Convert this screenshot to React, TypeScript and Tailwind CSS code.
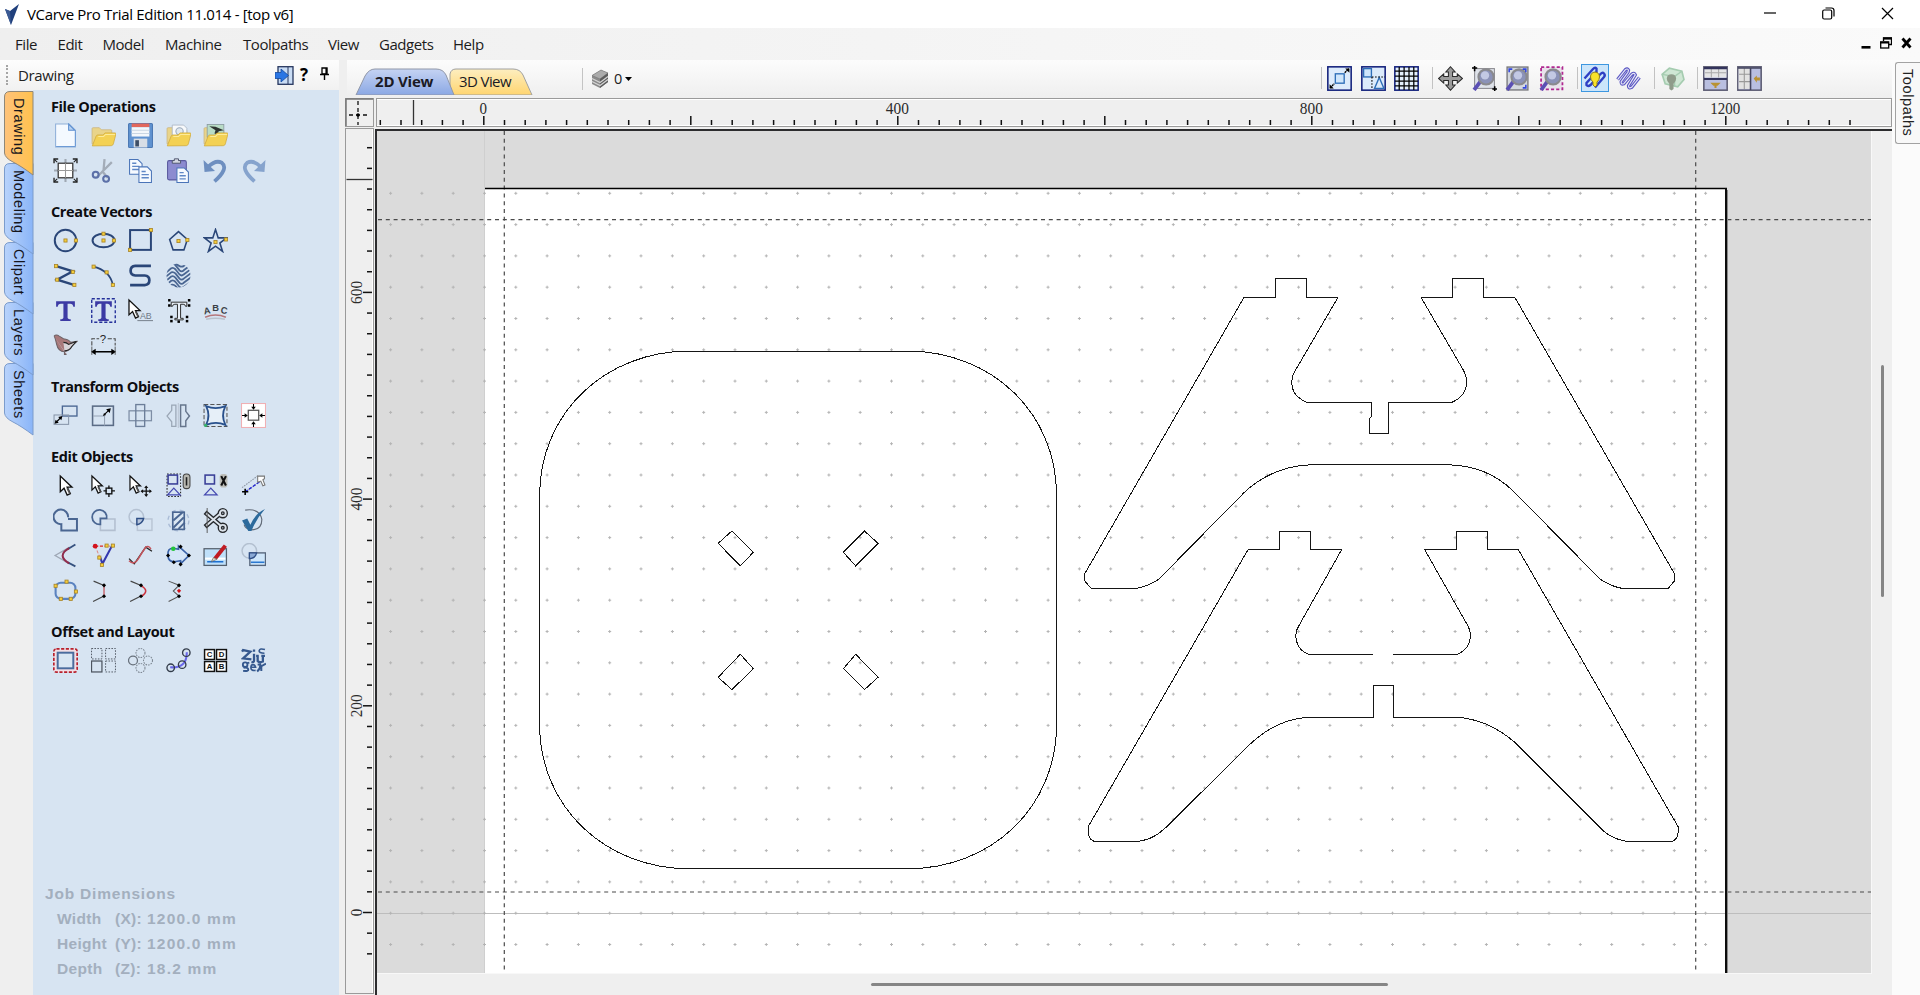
import React from "react";

type Kids = { children?: React.ReactNode };

const NAVY = "#2a4678";
const SLATE = "#4a6692";

const Icon = ({ children }: Kids) => (
  <svg width="25" height="25" viewBox="0 0 24 24" fill="none" strokeLinecap="butt">
    {children}
  </svg>
);

const Node = ({ x, y, c = "#f6cf3a" }: { x: number; y: number; c?: string }) => (
  <rect x={x - 1.5} y={y - 1.5} width="3" height="3" fill={c} stroke="#a8842a" strokeWidth="0.8" />
);

const Dot = ({ x, y, c = "#000" }: { x: number; y: number; c?: string }) => (
  <path d={`M${x - 2} ${y}l2 -2l2 2l-2 2z`} fill={c} />
);

const Cursor = ({ x = 0, y = 0, s = 1 }: { x?: number; y?: number; s?: number }) => (
  <g transform={`translate(${x} ${y}) scale(${s})`}>
    <path d="M1 1v15l3.6-3.4l3 6.6l3-1.4l-3-6.2h4.6z" fill="#fff" stroke="#111" strokeWidth="1.3" />
    <path d="M7.6 12.5l2.6 5.4" stroke="#555" strokeWidth="1.6" />
  </g>
);

const Folder = ({ children }: Kids) => (
  <Icon>
    <path d="M1 20V5.5q0-1 1-1h6l2 2h9q1 0 1 1V20z" fill="#e9d48a" stroke="#c9b27a" strokeWidth="0.7" />
    {children}
    <path d="M1.2 22L5 12.5q.5-1 1.5-1h5l2-2H23q1.3 0 .9 1.2L21.5 20q-.4 1.6-2 1.8z" fill="#f3d154" stroke="#cfa83a" strokeWidth="0.7" />
    <path d="M7 13h5l2-2h9" stroke="#fdeb9a" />
  </Icon>
);

const fileIcons = [
  <Icon>
    <path d="M2.500 1h13l6 6v16h-19z" fill="#f4f9ff" stroke="#8fafd8" />
    <path d="M15 1v6h6z" fill="#b7d2f2" stroke="#5d8fd0" />
    <path d="M3 22.500h18.500M21.500 8v14" stroke="#6c9ad6" />
  </Icon>,
  <Folder />,
  <Icon>
    <rect x="0.500" y="0.500" width="23" height="23" rx="1" fill="#5f92d0" stroke="#4c79b4" />
    <rect x="3.500" y="0.500" width="17" height="3.500" fill="#e2675c" />
    <rect x="3.500" y="4" width="17" height="9" fill="#f3f7fb" />
    <path d="M3.500 7h17M3.500 10h17" stroke="#c9d6e4" />
    <rect x="5.500" y="15" width="13" height="8.500" fill="#d8dee6" />
    <rect x="7" y="16.500" width="3.500" height="6" fill="#3d4e66" />
  </Icon>,
  <Folder>
    <path d="M6 2h11l3 3v8H6z" fill="#f7f9fb" stroke="#a9b6c4" strokeWidth="0.8" />
    <circle cx="13" cy="8" r="3.500" stroke="#9aa9bb" fill="#dfe7ee" />
  </Folder>,
  <Folder>
    <rect x="4" y="1.500" width="16" height="12" fill="#b9dcc6" stroke="#8a9aa0" strokeWidth="0.8" />
    <path d="M6 3l6 .5l8 3.500l-5 1l-1 3l-3-1l1-3z" fill="#2f3432" />
  </Folder>,
];

const editIcons = [
  <Icon>
    <path d="M12 1v22M1 12h22" stroke="#9fa8b3" strokeWidth="2" />
    <rect x="5" y="5" width="14" height="14" fill="#fff" stroke="#333" strokeWidth="1.200" />
    <path d="M12 5v14M5 12h14" stroke="#9a9a9a" />
    <path d="M1 5V1h4M19 1h4v4M23 19v4h-4M5 23H1v-4" stroke="#222" strokeWidth="1.300" />
    <path d="M1 1l3 3M23 1l-3 3M23 23l-3-3M1 23l3-3" stroke="#222" />
  </Icon>,
  <Icon>
    <path d="M13 1l-1 11l-6 6M20 4l-9 9l5 6" stroke="#a3acb8" strokeWidth="2.200" />
    <circle cx="4.500" cy="16" r="2.800" stroke="#5c70a8" strokeWidth="2" />
    <circle cx="14.500" cy="20" r="2.800" stroke="#5c70a8" strokeWidth="2" />
  </Icon>,
  <Icon>
    <path d="M1.500 1.500h8l4 4v10h-12z" fill="#f6faff" stroke="#4a74b8" />
    <path d="M4 5h4M4 8h7M4 11h7" stroke="#5f87c6" strokeWidth="1.300" />
    <path d="M10.500 8.500h8l4 4v11h-12z" fill="#f6faff" stroke="#4a74b8" />
    <path d="M13 13h4M13 16h7M13 19h7" stroke="#5f87c6" strokeWidth="1.300" />
  </Icon>,
  <Icon>
    <rect x="1.500" y="2.500" width="18" height="18.500" rx="1.500" fill="#8c8bd0" stroke="#5a5a9e" />
    <path d="M6 5V2.500h2V.8h4v1.700h2V5z" fill="#d5d9e4" stroke="#4a5068" strokeWidth="0.900" />
    <path d="M10.500 9.500h7l4 4v10h-11z" fill="#f6faff" stroke="#4a74b8" />
    <path d="M13 14h4M13 17h6M13 20h6" stroke="#5f87c6" strokeWidth="1.300" />
  </Icon>,
  <Icon>
    <path d="M5 8.500Q12 1.500 18 4.500Q25 10 11 22.500" stroke="#6e8fc0" strokeWidth="3.600" />
    <path d="M.5 2l1 11.500l10-1z" fill="#6e8fc0" />
  </Icon>,
  <Icon>
    <path d="M19 8.500Q12 1.500 6 4.500Q-1 10 13 22.500" stroke="#86a3cd" strokeWidth="3.600" />
    <path d="M23.500 2l-1 11.500l-10-1z" fill="#86a3cd" />
  </Icon>,
];

const vectorRow1 = [
  <Icon>
    <circle cx="12" cy="12" r="10.300" stroke={NAVY} strokeWidth="1.900" />
    <Node x={12} y={12} />
    <Node x={22} y={12} />
  </Icon>,
  <Icon>
    <ellipse cx="12" cy="12" rx="10.500" ry="6.500" stroke={NAVY} strokeWidth="1.900" />
    <Node x={12} y={12} />
    <Node x={12} y={5.500} />
    <Node x={22} y={12} />
  </Icon>,
  <Icon>
    <rect x="2" y="2" width="20" height="19" stroke={NAVY} strokeWidth="1.900" />
    <Node x={22} y={2} />
    <Node x={2} y={21} />
  </Icon>,
  <Icon>
    <path d="M12 3.500l8.500 7.500l-3.300 10h-10.400l-3.300-10z" stroke={NAVY} strokeWidth="1.500" />
    <Node x={12} y={12.500} />
    <Node x={20.500} y={11.500} />
  </Icon>,
  <Icon>
    <path d="M12 1.500l2.600 8h8l-6.400 5l2.600 8l-6.800-5l-6.800 5l2.600-8l-6.400-5h8z" stroke={NAVY} strokeWidth="1.500" />
    <Node x={12} y={13.500} />
    <Node x={22} y={11} />
  </Icon>,
];

const vectorRow2 = [
  <Icon>
    <path d="M3 3l16 5L4 16l16 5" stroke={NAVY} strokeWidth="2.300" />
    <Node x={3} y={3} />
    <Node x={19} y={8.500} />
    <Node x={4} y={16} />
    <Node x={20.500} y={21} />
  </Icon>,
  <Icon>
    <path d="M2 3.500Q18 7 21 21" stroke={NAVY} strokeWidth="1.600" />
    <Node x={2.500} y={3.500} />
    <Node x={15} y={9} />
    <Node x={21} y={21} />
  </Icon>,
  <Icon>
    <path d="M22 2.800H7q-4.500.4-4.500 4.600T7 12h9q4.500.3 4.500 4.600T16 21.200H2" stroke={NAVY} strokeWidth="2.600" />
  </Icon>,
  <Icon>
    <clipPath id="swirl">
      <circle cx="12" cy="12" r="11.500" />
    </clipPath>
    <g clipPath="url(#swirl)" stroke={SLATE} strokeWidth="1.700">
      <path d="M-1 6L5 1q2-1 4 1l4 5q2 2 4 0l8-6" />
      <path d="M-1 10L5 5q2-1 4 1l4 5q2 2 4 0l8-6" />
      <path d="M-1 14L5 9q2-1 4 1l4 5q2 2 4 0l8-6" />
      <path d="M-1 18L5 13q2-1 4 1l4 5q2 2 4 0l8-6" />
      <path d="M-1 22L5 17q2-1 4 1l4 5q2 2 4 0l8-6" />
      <path d="M8 0l5 3q2 1 4 0l6-5M2 24l3-3q2-1 4 1l3 3" />
    </g>
  </Icon>,
];

const textRow = [
  <Icon>
    <path d="M3 3h18v5.500h-1.500q-.3-3-3-3H14v13.300q0 1.700 3 1.700V22H7v-1.500q3 0 3-1.700V5.500H7.500q-2.700 0-3 3H3z" fill="#3c3aa4" />
  </Icon>,
  <Icon>
    <rect x="0.700" y="0.700" width="22.600" height="22.600" stroke="#24309a" strokeWidth="1.300" strokeDasharray="3 1.800" />
    <path d="M4 3h16v5.500h-1.500q-.3-3-3-3H14v13.300q0 1.700 3 1.700V22H7v-1.500q3 0 3-1.700V5.500H8.500q-2.700 0-3 3H4z" fill="#3c3aa4" />
  </Icon>,
  <Icon>
    <Cursor x={0} y={1} s={0.950} />
    <text x="11.500" y="20.500" fontSize="8.500" fill="#6e7884" className="font-['Liberation_Sans']">AB</text>
    <path d="M9 21.700h15" stroke="#7a8490" />
  </Icon>,
  <Icon>
    <path d="M5 4h15v4h-1.200q-.3-2-2.300-2h-2.500v13.500h2.500V21H8.500v-1.500H11V6H8.500q-2 0-2.300 2H5z" fill="#e7eef6" stroke="#222" strokeWidth="0.900" />
    {[[3, 2], [22, 2], [3, 7], [22, 7], [5, 18], [5, 22], [12, 22.500], [20, 18], [20, 22]].map(([x, y]) => (
      <rect key={`${x}-${y}`} x={x - 1} y={y - 1} width="2.400" height="2.400" fill="#000" />
    ))}
  </Icon>,
  <Icon>
    <g fill="#3a3f46" fontSize="9" fontWeight="700" className="font-['Liberation_Sans']">
      <text x="0.500" y="15.500" transform="rotate(-10 3 12)">A</text>
      <text x="8.800" y="12">B</text>
      <text x="17" y="15" transform="rotate(10 20 12)">C</text>
    </g>
    <path d="M2 18.500q10-4.500 20 0" stroke="#b5777b" strokeWidth="1.400" />
    <path d="M3 20.500q9-2 18 0" stroke="#b9c2cc" strokeWidth="1.500" />
  </Icon>,
];

const traceRow = [
  <Icon>
    <path d="M1 3q2-2 5 0l4 2.500q5 .5 7 3.500l6-1l-5 4q-1 5-7 6v2.500h2M11 18q-6 0-7.500-7T1 3" fill="#a8787a" stroke="#6d6266" />
    <path d="M10 9q3 0 5 2l7.500-3l-4.500 5q-2 4-7 4" fill="#d8d3d8" stroke="#222" />
  </Icon>,
  <Icon>
    <path d="M.8 12V5.500h7M16 5.500h7.200V12" stroke="#444" strokeDasharray="4 1.500" />
    <text x="8.500" y="10" fontSize="11" fill="#222" className="font-['Liberation_Sans']">?</text>
    <path d="M2 18h20" stroke="#000" strokeWidth="1.500" />
    <path d="M0 18l4.500-3v6zM24 18l-4.500-3v6z" fill="#000" />
    <path d="M.8 13v8M23.200 13v8" stroke="#444" strokeWidth="0.800" />
  </Icon>,
];

const transformRow = [
  <Icon>
    <rect x="9" y="3" width="14" height="9.500" stroke={SLATE} strokeWidth="1.300" />
    <rect x="1" y="11.500" width="14" height="9" stroke="#8795a9" />
    <path d="M3 18.500l4.500-4.500" stroke="#000" strokeWidth="1.200" />
    <path d="M1.500 20l1-4l3 3zM9 12.500l-1 4l-3-3z" fill="#000" />
  </Icon>,
  <Icon>
    <rect x="1.500" y="3" width="20" height="18.500" stroke="#5b6c86" strokeWidth="1.500" />
    <path d="M2 12.500h11v9" stroke="#97a4b5" />
    <path d="M13 11l4-4" stroke="#000" />
    <path d="M19 5l-1 4.500l-3.500-3.500zM11.500 12.500l1-3l2 2z" fill="#000" />
  </Icon>,
  <Icon>
    <rect x="1" y="7.500" width="21.500" height="9.500" stroke="#7d8da5" strokeWidth="1.200" />
    <rect x="7.500" y="1.500" width="8.500" height="21" stroke="#6c7e99" strokeWidth="1.300" />
  </Icon>,
  <Icon>
    <path d="M9.500 2v20.500H5.500V18L1 12.500L5.500 7V2z" stroke="#9aa6b5" strokeWidth="1.200" />
    <path d="M14 2v20.500h5V17l3.500-4.500L19 8V2z" stroke="#66758c" strokeWidth="1.400" />
    <path d="M11.800 0v24" stroke="#b9c4d2" />
  </Icon>,
  <Icon>
    <rect x="1" y="1.500" width="22" height="21" stroke="#555" strokeDasharray="4 2" />
    <path d="M3 3q9 4 18.500 0q-4.500 9 0 18q-9-4-18.500 0q4.500-9 0-18z" fill="#e6eff8" stroke="#28508c" strokeWidth="1.700" />
    <circle cx="2.500" cy="21.500" r="1.500" fill="#36b36a" />
  </Icon>,
  <Icon>
    <rect x="0.500" y="0.500" width="23" height="23" fill="#fff" stroke="#f0b0b4" />
    <rect x="7" y="7" width="10" height="9.500" stroke="#555" strokeWidth="1.200" />
    <path d="M12 1v4M12 19v4M1 12h4M19 12h4" stroke="#000" />
    <path d="M9.800 3.500h4.400L12 6.500zM9.800 20.500h4.400L12 17.500zM3.500 9.800v4.400L6.500 12zM20.500 9.800v4.400L17.500 12z" fill="#000" />
  </Icon>,
];

const objRow1 = [
  <Icon><Cursor x={6} y={2} s={1} /></Icon>,
  <Icon>
    <Cursor x={0} y={2} s={0.900} />
    <rect x="14.500" y="14.500" width="5.500" height="5.500" stroke="#111" strokeWidth="1.300" />
    <path d="M17.200 12v3M17.200 20v3M12 17.200h3M20 17.200h3" stroke="#111" strokeWidth="1.300" />
  </Icon>,
  <Icon>
    <Cursor x={1} y={2} s={0.900} />
    <path d="M17.500 13v9M13 17.500h9" stroke="#111" strokeWidth="1.200" />
    <path d="M15.500 14.500h4l-2-2.500zM15.500 20.500h4l-2 2.500zM14.500 15.500v4L12 17.500zM20.500 15.500v4l2.500-2z" fill="#111" />
  </Icon>,
  <Icon>
    <rect x="1" y="1" width="13" height="21.500" stroke="#222" strokeDasharray="1.500 1.500" />
    <rect x="2" y="2" width="9" height="8.500" stroke="#3a3f98" strokeWidth="1.500" />
    <path d="M1.500 21h12L7.500 14.500z" stroke="#4448b0" strokeWidth="1.200" />
    <rect x="16.500" y="1" width="6.500" height="14" rx="3" fill="#b7b7b0" stroke="#444" />
    <path d="M19.700 4v8" stroke="#222" strokeWidth="1.500" />
  </Icon>,
  <Icon>
    <rect x="2" y="2" width="9" height="8.500" stroke="#3a3f98" strokeWidth="1.500" />
    <path d="M1.500 21h12L7.500 14.500z" stroke="#4448b0" strokeWidth="1.200" />
    <rect x="16" y="1" width="7.500" height="13" rx="3" fill="#bdbdb8" />
    <path d="M17.500 3l4.500 9M22 3L17.500 12" stroke="#111" strokeWidth="2" />
  </Icon>,
  <Icon>
    <path d="M1 14L17 2M5 18L21 6" stroke="#8b95a3" strokeDasharray="1.500 1" />
    <path d="M4 18L20 7" stroke="#2424d8" strokeWidth="1.300" strokeDasharray="3 1.500" />
    <path d="M4 15v6M1 18h6" stroke="#000" strokeWidth="1.500" />
    <path d="M16 3h6.500v2.500l-1.500 1l2 5l-2 .8l-2-4.500l-3 1z" fill="#fff" stroke="#777" />
  </Icon>,
];

const objRow2 = [
  <Icon>
    <path d="M14.500 9A7 7 0 1 0 8 15.500V21.500h15V10.500h-8.600" stroke={SLATE} strokeWidth="1.900" />
  </Icon>,
  <Icon>
    <path d="M9 10.500h14v11H9v-6" stroke="#b3bfd0" strokeWidth="1.500" />
    <path d="M15 10A7 7 0 1 0 9 15.700V10z" stroke={SLATE} strokeWidth="1.700" />
  </Icon>,
  <Icon>
    <circle cx="8" cy="8.500" r="7" stroke="#b5c2d3" strokeWidth="1.400" />
    <rect x="9" y="10.500" width="14" height="11" stroke="#b9c5d5" strokeWidth="1.400" />
    <path d="M8.500 10h6.500q-1 5-6.500 6z" fill="#b8c6dc" stroke="#2f4f86" strokeWidth="1.400" />
  </Icon>,
  <Icon>
    <circle cx="12" cy="12" r="10" stroke="#a9bbd6" strokeDasharray="4 4" strokeWidth="1.300" />
    <rect x="6.500" y="4" width="11" height="16.500" fill="#dbe7f3" stroke={SLATE} strokeWidth="1.600" />
    <path d="M7 12l9-8M7 19l10-10M12 20l6-6" stroke={SLATE} strokeWidth="1.900" />
  </Icon>,
  <Icon>
    <g stroke="#26292d" strokeWidth="4.400">
      <path d="M2 4l15 13M2 18L17 5" />
      <circle cx="19" cy="5" r="2.800" /><circle cx="19" cy="19" r="2.800" />
    </g>
    <g stroke="#dbe2ea" strokeWidth="1.800">
      <path d="M3 5l14 12M3 17L17 5" />
      <circle cx="19" cy="5" r="2.800" /><circle cx="19" cy="19" r="2.800" />
    </g>
    <path d="M4 0v24" stroke="#555" strokeWidth="0.900" />
  </Icon>,
  <Icon>
    <path d="M4 2Q18 0 20 11Q20 21 10 21Q4 20 3 16" stroke="#626b78" strokeWidth="1.100" />
    <path d="M1 12l5-2l3 6Q14 5 23 1Q15 10 10 22H7Z" fill="#2c6a9c" />
  </Icon>,
];

const objRow3 = [
  <Icon>
    <path d="M16 4L2 12l14 8" stroke="#9ea7b5" strokeWidth="1.200" />
    <path d="M21.500 1.500L14 6M14 18.500l7.500 4" stroke="#35517f" strokeWidth="1.800" />
    <path d="M15.500 5Q3 12 15.500 19.500" stroke="#8f2c4c" strokeWidth="2" />
  </Icon>,
  <Icon>
    <path d="M4 3h14" stroke="#d22" strokeDasharray="3 1.500" strokeWidth="1.300" />
    <path d="M4 3l5 12" stroke="#d88" strokeDasharray="3 1.500" />
    <path d="M20 3L11 20l-2-6" stroke="#3438ae" strokeWidth="2" />
    <Dot x={4} y={3} c="#d3121c" />
    <circle cx="4" cy="3" r="2.300" fill="#d3121c" />
    <Node x={15} y={2.500} />
    <Node x={21} y={2.500} />
    <Node x={8} y={14} />
    <Node x={10.500} y={21} />
  </Icon>,
  <Icon>
    <path d="M1 15l5 5L17 4l6 4" stroke="#222" strokeWidth="1.200" />
    <path d="M1 17q5 5 9-2T17 4q3-2 5 2" stroke="#c3545c" strokeWidth="1.500" />
  </Icon>,
  <Icon>
    <path d="M2 12Q1 5 7 5L12 6V3L22 12L14 20V17L8 18Q2 18 2 12z" fill="#d5e5f8" stroke="#3a62a8" strokeWidth="1.600" />
    <Dot x={2} y={12} /><Dot x={14} y={3.500} /><Dot x={22} y={12} /><Dot x={14} y={20.500} /><Dot x={7.500} y={18.500} />
    <circle cx="7" cy="5.500" r="2.200" fill="#23c43a" />
  </Icon>,
  <Icon>
    <rect x="1" y="5.500" width="21.500" height="16" fill="#bfe0fa" stroke="#555f6c" strokeWidth="1.200" />
    <path d="M4 18h15.500" stroke="#1e70d0" strokeWidth="1.500" />
    <path d="M2 15h19.500" stroke="#fff" strokeWidth="2" />
    <path d="M10 14L20 1.500l3 2L13.500 15.500z" fill="#c01c24" />
    <path d="M10 14l-2 4l5.500-2.500z" fill="#e9dcc9" stroke="#555" strokeWidth="0.600" />
  </Icon>,
  <Icon>
    <circle cx="8" cy="7.500" r="7" stroke="#b3c0d0" strokeWidth="1.400" />
    <rect x="8.500" y="9.500" width="15" height="12" fill="#cfe6fa" stroke="#56657b" strokeWidth="1.300" />
    <path d="M9.500 18.500h13" stroke="#2b78d0" strokeWidth="1.500" />
    <path d="M8 9.500h7q-1 5-7 5.500z" fill="#8aa9d4" stroke="#2f4f86" strokeWidth="1.300" />
  </Icon>,
];

const objRow4 = [
  <Icon>
    <rect x="2.500" y="4.500" width="19" height="15.500" rx="5" stroke="#5b83c0" strokeWidth="2" />
    <Node x={2.500} y={7.500} /><Node x={13} y={3.500} /><Node x={22} y={13} /><Node x={7.500} y={20} /><Node x={17} y={20} />
  </Icon>,
  <Icon>
    <path d="M2.500 3L12 7M12 17.500l-10 5" stroke="#444" strokeWidth="1.100" />
    <path d="M12.500 7.500v10" stroke="#c86870" strokeWidth="1.400" />
    <Dot x={12.500} y={7} /><Dot x={12.500} y={17.500} />
  </Icon>,
  <Icon>
    <path d="M2.500 3L12 7M12 17.500l-10 5" stroke="#444" strokeWidth="1.100" />
    <path d="M13 7.500q8 5 0 10" stroke="#cc3540" strokeWidth="1.500" />
    <Dot x={12.500} y={7} /><Dot x={12.500} y={17.500} />
  </Icon>,
  <Icon>
    <path d="M2.500 3l10 4L7 12.500l5.500 5l-10 5" stroke="#555" strokeWidth="1" />
    <Dot x={12.500} y={7} /><Dot x={12.500} y={12.300} c="#d3121c" /><Dot x={12.500} y={17.500} />
  </Icon>,
];

const Box = ({ x, y, t }: { x: number; y: number; t: string }) => (
  <g>
    <rect x={x} y={y} width="9.500" height="9.500" fill="#fff" stroke="#111" strokeWidth="1.400" />
    <text x={x + 4.750} y={y + 7.400} fontSize="7.500" fontWeight="700" textAnchor="middle" fill="#111" className="font-['Liberation_Sans']">{t}</text>
  </g>
);

const offsetRow = [
  <Icon>
    <rect x="0.800" y="0.800" width="22.400" height="22.400" rx="2.500" fill="#f3dfe6" stroke="#b8202c" strokeWidth="1.600" strokeDasharray="3 1.500" />
    <rect x="4.500" y="4.500" width="15" height="15" fill="#d8e6f3" stroke="#4a6c9e" strokeWidth="1.900" />
  </Icon>,
  <Icon>
    <g stroke="#4d5560" strokeDasharray="1.500 1.300" strokeWidth="0.900">
      <rect x="0.500" y="0.500" width="10" height="10" />
      <rect x="14" y="0.500" width="9.500" height="10" />
      <rect x="14" y="12.500" width="9.500" height="10.500" />
    </g>
    <rect x="0.500" y="12.500" width="10" height="10.500" stroke="#4d5560" strokeWidth="1.200" />
  </Icon>,
  <Icon>
    <g stroke="#7b8590" strokeDasharray="1.500 1" strokeWidth="1">
      <circle cx="12" cy="4.800" r="4.300" /><circle cx="19.200" cy="12" r="4.300" /><circle cx="12" cy="19.200" r="4.300" />
    </g>
    <circle cx="4.800" cy="12" r="4.300" stroke="#68717c" strokeWidth="1.200" />
  </Icon>,
  <Icon>
    <path d="M4 18.500Q20 20 20 4" stroke="#6a68ea" strokeWidth="2" />
    <g stroke="#333c4a" strokeWidth="1.300">
      <circle cx="4.500" cy="19" r="3.600" /><circle cx="15.500" cy="16" r="3.600" /><circle cx="19.500" cy="4.500" r="3.600" />
    </g>
  </Icon>,
  <Icon>
    <Box x={1.500} y={1.500} t="C" /><Box x={13} y={1.500} t="D" /><Box x={1.500} y={13} t="A" /><Box x={13} y={13} t="B" />
  </Icon>,
  <Icon>
    <g stroke="#35588e" strokeWidth="2.200">
      <path d="M1 3.500L2 2l7 1.500L2 10l8 1" />
      <path d="M12.500 5.500V12q0 2-2.500 1.500M12.500 1.500v2" />
      <path d="M16 7v5.500q1.500 2 5 .5V7M14.500 7.500h2.500M19.500 7.500H23" />
      <path d="M23 1.500q-5-1.500-5.500 1T22.500 5" strokeWidth="1.600" />
      <circle cx="4" cy="16" r="2.200" strokeWidth="1.800" />
      <path d="M6 14.500l2-.5M2.500 19q4-.5 4.500 1.500T2 22" strokeWidth="1.800" />
      <path d="M9.500 18.500h4.500q-.5-2.500-2.500-2.500T9.500 19t4.500 2.500" strokeWidth="1.600" />
      <path d="M16 16l2.500-.5q.5 4-3 7M24 15l-4.500 2.500V22" strokeWidth="1.900" />
    </g>
  </Icon>,
];

const sections: { title: string; rows: React.ReactElement[][] }[] = [
  { title: "File Operations", rows: [fileIcons, editIcons] },
  { title: "Create Vectors", rows: [vectorRow1, vectorRow2, textRow, traceRow] },
  { title: "Transform Objects", rows: [transformRow] },
  { title: "Edit Objects", rows: [objRow1, objRow2, objRow3, objRow4] },
  { title: "Offset and Layout", rows: [offsetRow] },
];

const ToolPanel = () => (
  <div className="flex w-[306px] flex-col bg-[#d7e4f2] pl-[14px]">
    <div className="-mt-[7px] flex-1">
      {sections.map((s) => (
        <section key={s.title}>
          <h2 className="flex h-[35px] items-end pl-[4px] font-['Open_Sans'] text-[14.500px] leading-[23px] font-bold tracking-[-0.380px] text-[#0c0c10]">
            {s.title}
          </h2>
          {s.rows.map((row, i) => (
            <div key={i} className="flex h-[35px]">
              {row.map((icon, j) => (
                <button key={j} className="flex h-[35px] w-[37.500px] items-center justify-center">{icon}</button>
              ))}
            </div>
          ))}
        </section>
      ))}
    </div>
    <div className="mb-[14px] -ml-[2px] font-['Liberation_Sans'] text-[15.500px] leading-[25px] font-bold text-[#a3afbe]">
      <div className="tracking-[0.8px]">Job Dimensions</div>
      {[["Width", "(X):", "1200.0 mm"], ["Height", "(Y):", "1200.0 mm"], ["Depth", "(Z):", "18.2 mm"]].map(([a, b, c]) => (
        <div key={a} className="flex pl-[12px] tracking-[0.3px]">
          <span className="w-[58px]">{a}</span>
          <span className="w-[32px]">{b}</span>
          <span className="tracking-[1.2px]">{c}</span>
        </div>
      ))}
    </div>
  </div>
);

const sideTabs = [
  { label: "Drawing", h: 72, z: "z-50", gap: "h-[72px] pt-[7px]", on: true },
  { label: "Modeling", h: 79, z: "z-40", gap: "h-[79px] pt-[7px]" },
  { label: "Clipart", h: 60, z: "z-30", gap: "h-[60px] pt-[7px]" },
  { label: "Layers", h: 61, z: "z-20", gap: "h-[61px] pt-[7px]" },
  { label: "Sheets", h: 60, z: "z-10", gap: "h-[60px] pt-[7px]" },
];

const SideTabs = () => (
  <div className="flex w-[33px] flex-col pt-[1px] pl-[4px]">
    {sideTabs.map((t) => (
      <div key={t.label} className={`relative flex w-[29px] pl-[3px] ${t.z} ${t.gap}`}>
        <svg className="absolute top-0 left-0 overflow-visible" width="29" height={t.h}>
          <defs>
            <linearGradient id={`tab-${t.label}`}>
              <stop offset="0" stopColor={t.on ? "#ffc27a" : "#b9d3fb"} />
              <stop offset="1" stopColor={t.on ? "#ffc24e" : "#8ab5f8"} />
            </linearGradient>
          </defs>
          <path
            d={`M29 0.500H6Q0.500 0.500 0.500 6V${t.h - 10}Q1 ${t.h - 5} 9 ${t.h - 1}T29 ${t.h + 12}z`}
            fill={`url(#tab-${t.label})`}
            stroke={t.on ? "#8f8778" : "#7c9ccc"}
          />
        </svg>
        <span className="relative font-['Liberation_Sans'] text-[14.500px] leading-[23px] tracking-[0.600px] text-[#15151c] [writing-mode:vertical-rl]">
          {t.label}
        </span>
      </div>
    ))}
  </div>
);

const Magnifier = () => (
  <g>
    <path d="M2 23l6-8" stroke="#5b4fb4" strokeWidth="3.600" />
    <circle cx="13.500" cy="10.500" r="7.300" fill="#8b92b8" stroke="#8a8a8e" strokeWidth="2" />
    <circle cx="12.500" cy="9" r="4" fill="#c3c9e4" />
  </g>
);

const viewTools: React.ReactElement[][] = [
  [
    <Icon>
      <rect x="0.800" y="0.800" width="22.400" height="22.400" fill="#dcebfb" stroke="#14227c" strokeWidth="1.500" />
      <rect x="8" y="7.500" width="8.500" height="9" fill="#cfe6fb" stroke="#2f6fb8" strokeWidth="1.300" />
      <path d="M3 21l4-4M17 6.500l4-4" stroke="#000" strokeWidth="1.300" strokeDasharray="2 0.500" />
      <path d="M2.500 21.500v-4L6.500 21.500zM21.500 2.500v4L17.500 2.500z" fill="#000" />
    </Icon>,
    <Icon>
      <rect x="0.800" y="0.800" width="22.400" height="22.400" fill="#dcebfb" stroke="#14227c" strokeWidth="1.500" />
      <rect x="2.500" y="2.500" width="7.500" height="8" fill="#cfe6fb" stroke="#2f6fb8" strokeWidth="1.300" />
      <path d="M13 21.500h9L17.500 11z" stroke="#2f6fb8" strokeWidth="1.300" />
      <path d="M10.500 10.500V22M10.500 10.500H23" stroke="#000" strokeDasharray="1.500 1.500" />
    </Icon>,
    <Icon>
      <rect x="0.800" y="0.800" width="22.400" height="22.400" fill="#e4f0fc" stroke="#14227c" strokeWidth="1.500" />
      <path d="M5 1v22M9.700 1v22M14.400 1v22M19 1v22M1 5h22M1 9.700h22M1 14.400h22M1 19h22" stroke="#000" strokeWidth="1.200" />
    </Icon>,
  ],
  [
    <Icon>
      <path d="M12 .7l4.500 5H14V10h4.500V7.500l5 4.500l-5 4.500V14H14v4.300h2.500l-4.500 5l-4.500-5H10V14H5.500v2.500L.5 12l5-4.500V10H10V5.700H7.500z" fill="#9b9b9b" stroke="#2a2a2a" strokeWidth="1" />
    </Icon>,
    <Icon>
      <rect x="2.500" y="2.500" width="19" height="19" fill="#dfe3ea" stroke="#8a8a90" />
      <Magnifier />
      <path d="M0 2h5M2.500 0v5M19.500 22h4.500M21.800 19.500v4.500" stroke="#000" strokeWidth="1.500" />
    </Icon>,
    <Icon>
      <rect x="2" y="1" width="20" height="22" fill="#d4d8de" stroke="#77777c" strokeWidth="1.300" />
      <Magnifier />
      <path d="M4 6V3h3M17 3h3v3M20 18v3h-3" stroke="#3448e0" strokeWidth="1.500" />
    </Icon>,
    <Icon>
      <rect x="2" y="1" width="20.500" height="21.500" fill="#e9e2ec" stroke="#b02890" strokeWidth="1.700" strokeDasharray="3 2" />
      <Magnifier />
    </Icon>,
  ],
  [
    <span className="flex h-[28px] w-[28px] items-center justify-center border border-[#3d97e0] bg-[#cbe5fa]">
      <svg width="26" height="26" viewBox="0 0 26 26" fill="none">
        <path d="M2.500 13.500L11 4q2-2 3.500-.5V7L4.500 18v2q1.500 2 4 0L18.500 9q2-2 3.500-.5T22 12l-9 10.500" stroke="#2d3fc4" strokeWidth="2.400" />
        <path d="M13 7q4.500.5 4.500 5q0 3-2.500 5v3l-2 2l-2-2v-3q-2.500-2-2.500-5q0-4.500 4.500-5z" fill="#f8e22a" stroke="#8d7c20" />
      </svg>
    </span>,
    <Icon>
      <path d="M1.500 13L9 3.500q2-1.500 3 .5l-.5 2L5 15q-.5 3 2.500 2L15 8q2.500-2 3.500.5L12 19q0 3 3 1.500L22.500 11" stroke="#5c58c4" strokeWidth="3.200" />
      <path d="M1.500 13L9 3.500q2-1.500 3 .5l-.5 2L5 15q-.5 3 2.500 2L15 8q2.500-2 3.500.5L12 19q0 3 3 1.500L22.500 11" stroke="#e6e7f6" strokeWidth="1.100" />
    </Icon>,
  ],
  [
    <Icon>
      <path d="M2 8l7-6l12 3l2 8l-6 7l-12-3z" fill="#cfe6d4" stroke="#a5ccb0" strokeWidth="1.600" />
      <path d="M2 8l12 2l7-5M14 10v10" stroke="#a5ccb0" strokeWidth="1.300" />
      <path d="M11 8q4 0 4.500 4q0 3-2.500 5v5l-2 1.500L9 22v-5q-2.500-2-2.500-5q.5-4 4.500-4z" fill="#8f9b8a" />
    </Icon>,
  ],
  [
    <Icon>
      <rect x="0.800" y="0.800" width="22.400" height="22.400" fill="#b9bfe0" stroke="#5c5c72" strokeWidth="1.500" />
      <rect x="1.500" y="2" width="21" height="9" fill="#e6e6e6" />
      <path d="M2 6.500h20.500M8 2v9M15 2v9" stroke="#a9a9a9" />
      <path d="M1 2h22M1 12.500h22" stroke="#33345c" strokeWidth="2" />
      <path d="M7 16h10l-3 3h-1v2h-2v-2h-1z" fill="#b99232" />
    </Icon>,
    <Icon>
      <rect x="0.800" y="0.800" width="22.400" height="22.400" fill="#b9bfe0" stroke="#5c5c72" strokeWidth="1.500" />
      <rect x="1.500" y="2" width="11" height="20" fill="#e2e2e2" />
      <path d="M2 8h11M2 15h11M7 2v20" stroke="#999" />
      <path d="M1 2h22M13 2v21" stroke="#44455f" strokeWidth="1.500" />
      <path d="M16 12l3-3v2h3v3h-3v2z" fill="#b99232" />
    </Icon>,
  ],
];

const ViewBar = () => (
  <div className="flex h-[37px] items-center bg-gradient-to-b from-[#fcfcfc] to-[#efefef]">
    <div className="relative h-[37px] w-[235px]">
      <svg className="absolute top-[8px] left-[5px]" width="182" height="27" fill="none">
        <defs>
          <linearGradient id="blue" x2="0" y2="1"><stop offset="0" stopColor="#c5d3f3" /><stop offset="1" stopColor="#8ba8e4" /></linearGradient>
          <linearGradient id="gold" x2="0" y2="1"><stop offset="0" stopColor="#fdeec0" /><stop offset="1" stopColor="#ffd570" /></linearGradient>
        </defs>
        <path d="M98 27V6q1-5 6-5h57q7 0 10 6l9 20z" fill="url(#gold)" stroke="#a0a0a0" />
        <path d="M4 27L13 8q4-7 10-7h61q7 0 10 6l8 20z" fill="url(#blue)" stroke="#9097a8" />
      </svg>
      <div className="relative flex pt-[9.500px] pl-[28px] font-['Open_Sans'] text-[15px] leading-[23px] text-[#1a1a24]">
        <span className="w-[84px] font-bold tracking-[-0.200px]">2D View</span>
        <span className="tracking-[-0.600px]">3D View</span>
      </div>
    </div>
    <div className="flex h-[22px] items-center border-l border-[#c4c4c4] pl-[8px]">
      <svg width="18" height="20" viewBox="0 0 18 20">
        <path d="M1 6.500L10 1l7 3v9l-8 6l-8-4z" fill="#8b8b8b" />
        <path d="M1 6.500L10 1l7 3l-8 6z" fill="#ababab" stroke="#777" strokeWidth="0.600" />
        <path d="M9 10v9l8-6V4z" fill="#5c5c5c" />
        <path d="M1 9.500l8 4l8-6M1 12.500l8 4l8-6" stroke="#d5d5d5" strokeWidth="1.200" fill="none" />
      </svg>
      <span className="ml-[5px] font-['Open_Sans'] text-[14.500px] leading-[20px] text-[#222]">0</span>
      <svg className="ml-[3px]" width="7" height="4"><path d="M0 0h7l-3.500 4z" fill="#000" /></svg>
    </div>
    <div className="mr-[126px] mb-[1px] ml-auto flex">
      {viewTools.map((g, i) => (
        <div key={i} className="flex items-center">
          <span className="ml-[8.500px] h-[22px] w-px bg-[#c2c2c2]" />
          {g.map((icon, j) => (
            <button key={j} className="flex h-[36px] w-[33.800px] items-center justify-center">{icon}</button>
          ))}
        </div>
      ))}
    </div>
  </div>
);

const UNIT = 20.7;

const TopRuler = () => (
  <svg className="block" width="1516" height="29">
    <rect x="0.500" y="0.500" width="1515" height="28" fill="#efefef" stroke="#9a9a9a" />
    <path d="M1 1.500h1514M1 27.500h1514" stroke="#fff" />
    <path d="M37.500 2v25" stroke="#333" strokeWidth="1.300" />
    {Array.from({ length: 72 }, (_, k) => k - 5).map((i) => {
      const x = 107.800 + i * UNIT;
      return <path key={i} d={`M${x} ${i % 10 === 0 ? 18 : 22}V27`} stroke="#111" strokeWidth="1.500" />;
    })}
    {[0, 400, 800, 1200].map((n) => (
      <text key={n} x={107.300 + (n / 20) * UNIT} y="15.500" textAnchor="middle" fontSize="16.500" textLength={n === 0 ? 7.500 : n > 999 ? 30 : 23} lengthAdjust="spacingAndGlyphs" fill="#2b2b2b" className="font-['Liberation_Serif']">
        {n}
      </text>
    ))}
  </svg>
);

const LeftRuler = () => (
  <svg className="block" width="29" height="866">
    <rect x="0.500" y="0.500" width="28" height="865" fill="#efefef" stroke="#9a9a9a" />
    <path d="M27.500 1v864" stroke="#fff" />
    <path d="M1.500 51.500h26" stroke="#333" strokeWidth="1.300" />
    {Array.from({ length: 40 }, (_, k) => k - 2).map((i) => {
      const y = 784.500 - i * 20.670;
      return <path key={i} d={`M${i % 10 === 0 ? 18 : 22} ${y}H27`} stroke="#111" strokeWidth="1.500" />;
    })}
    {[0, 200, 400, 600].map((n) => (
      <text key={n} transform={`translate(16.500 ${784.500 - (n / 20) * 20.670}) rotate(-90)`} textAnchor="middle" fontSize="16.500" textLength={n === 0 ? 7.500 : 23} lengthAdjust="spacingAndGlyphs" fill="#2b2b2b" className="font-['Liberation_Serif']">
        {n}
      </text>
    ))}
  </svg>
);

const columns = Array.from({ length: 43 }, (_, k) => 484.500 + (k - 3) * 31.310).filter((x) => x < 1720);
const rowsY = Array.from({ length: 25 }, (_, k) => 193.300 + k * 31.300);

const Workspace = () => (
  <svg className="block" width="1496" height="848" viewBox="376 128 1496 848" fill="none">
    <rect x="376" y="127" width="1496" height="850" fill="#dbdbdb" />
    <rect x="484.500" y="189" width="1241.500" height="788" fill="#fff" />
    <g stroke="#c6c6c6" shapeRendering="crispEdges">
      <path d="M376 913.500H1872" stroke="#bdbdbd" />
      <path d="M484.500 130V975" stroke="#cfcfcf" />
      <path d="M484 973.500H1726" />
    </g>
    <path
      d={rowsY.flatMap((y) => columns.map((x) => `M${(x - 1.500).toFixed(1)} ${y.toFixed(1)}h3m-1.500 -1.500v3`)).join("")}
      stroke="#b4b4b4"
      strokeWidth="1"
    />
    <g stroke="#4a4a4a" strokeWidth="1.200" strokeDasharray="4 3.800">
      <path d="M378 219.700H1872M378 892H1872M504.300 131V974M1695.700 131V974" />
    </g>
    <path d="M485 188.500H1727" stroke="#000" strokeWidth="1.400" />
    <path d="M1726 188V976" stroke="#0c0c0c" strokeWidth="2" />
    <path d="M1727.500 190V976" stroke="#8a8a8a" />
    <g stroke="#151515" strokeWidth="1" shapeRendering="crispEdges">
      <path d="M690 351H907C991 351 1056.600 412 1056.600 496V724C1056.600 808 991 868.800 907 868.800H690C606 868.800 539.600 808 539.600 724V496C539.600 412 606 351 690 351z" />
      <path d="M731.900 531L753.300 552.300L740.300 566L718.200 543.300z" />
      <path d="M864.400 531L878.100 543.300L855.700 566L843.400 552.300z" />
      <path d="M740.300 654.300L753.300 668.700L731.900 689.700L718.200 677.300z" />
      <path d="M855.700 654.300L878.100 677.300L864.400 689.700L843.400 668.700z" />
      <path d="M1244 297.300H1275.600V278.300H1306.800V297.300H1338L1296.600 368.300Q1291.500 376 1291.800 383Q1292 396 1306.800 402.300H1371V417L1369.700 418V433.300H1388.700V402.300H1452Q1466 396 1466.600 383.300Q1467 376 1462.300 368.300L1421 297.300H1452V278.300H1483.600V297.300H1514.800L1674.600 574V580.700L1668.300 588.300H1621.600Q1610 586 1600 579L1512.900 490.700Q1487 466 1449.600 464.800H1309.600Q1271 467 1244 492.700L1159 579Q1149 586 1137.200 588.300H1091L1084.600 580.700V574z" />
      <path d="M1373.300 654.700H1309.600Q1296 650 1295.800 635Q1296 630 1299.300 625L1341.600 549.700H1310.400V531H1279.600V549.700H1248L1088.200 826.700V832.700Q1089 841.700 1097.700 841.700H1132.500Q1151 841.700 1165 828.300L1250 744.300Q1277 718.500 1309.600 717.300H1373.300V685.700H1393V717.300H1455.500Q1487 718.500 1514.800 742.300L1600.600 828.300Q1614 841.700 1633.500 841.700H1671Q1678.100 840 1678.100 832V826.700L1518.400 549.700H1487.200V531H1456V549.700H1424.700L1467.400 625Q1470.500 630 1470.500 635Q1470 650 1456 654.700H1393" />
    </g>
  </svg>
);

const menu: [string, string][] = [
  ["File", "w-[42.500px]"], ["Edit", "w-[45px]"], ["Model", "w-[62.500px]"], ["Machine", "w-[78px]"],
  ["Toolpaths", "w-[85px]"], ["View", "w-[51px]"], ["Gadgets", "w-[74px]"], ["Help", "w-[50px]"],
];

export default function App() {
  return (
    <div className="flex h-[995px] w-[1920px] flex-col overflow-hidden bg-[#efefef]">
      <header className="flex h-[28px] shrink-0 items-center bg-white pl-[4px]">
        <svg width="15" height="21" viewBox="0 0 15 21">
          <path d="M1 5l5 2L15 0L7 21z" fill="#20407c" />
          <path d="M1 5l5 2l1 14z" fill="#3b5a94" />
        </svg>
        <span className="ml-[8px] font-['Open_Sans'] text-[15px] tracking-[-0.330px] text-black">VCarve Pro Trial Edition 11.014 - [top v6]</span>
        <div className="mr-[26px] mb-[2px] ml-auto flex items-center gap-[46px]">
          <svg width="13" height="13"><path d="M1 6h12" stroke="#000" strokeWidth="1.200" /></svg>
          <svg width="13" height="13" fill="none" stroke="#000" strokeWidth="1.200">
            <rect x="0.700" y="3" width="9" height="9" rx="1.500" />
            <path d="M3.500 1h6q2.500 0 2.500 2.500v6" />
          </svg>
          <svg width="13" height="13"><path d="M1 1l11 11M12 1L1 12" stroke="#000" strokeWidth="1.200" /></svg>
        </div>
      </header>
      <nav className="flex h-[32px] shrink-0 items-center bg-gradient-to-r from-[#efefef] to-[#fafafa] pl-[15px] font-['Open_Sans'] text-[15px] tracking-[-0.450px] text-[#1c1c1c]">
        {menu.map(([m, w]) => (
          <span key={m} className={w}>{m}</span>
        ))}
        <div className="mr-[8px] mb-[3px] ml-auto flex items-center gap-[9px]">
          <svg width="10" height="12"><rect x="0.500" y="9" width="9" height="2.600" fill="#000" /></svg>
          <svg width="12" height="12" fill="none" stroke="#000">
            <path d="M3.500 4V1h8v6.500H9" strokeWidth="1.300" /><path d="M3 1.500h9" strokeWidth="2.200" />
            <rect x="0.700" y="5" width="8" height="6" strokeWidth="1.300" /><path d="M0 5.500h9" strokeWidth="2" />
          </svg>
          <svg width="11" height="12"><path d="M1.500 1.500l8 9M9.500 1.500l-8 9" stroke="#000" strokeWidth="2.800" /></svg>
        </div>
      </nav>
      <div className="flex h-[935px] shrink-0">
        <aside className="flex w-[339px] flex-col">
          <div className="flex h-[30px] shrink-0 items-center bg-gradient-to-b from-[#fdfdfd] to-[#f1f1f1] pl-[6px]">
            <span className="h-[20px] border-l-2 border-dotted border-[#a5a5a5]" />
            <span className="ml-[10px] font-['Open_Sans'] text-[15px] tracking-[-0.350px] text-[#222]">Drawing</span>
            <svg className="mr-[6px] ml-auto" width="19" height="19" viewBox="0 0 19 19">
              <rect x="3" y="0.700" width="15" height="17.600" fill="#c9dcf4" stroke="#26365e" strokeWidth="1.300" />
              <path d="M13 1v17" stroke="#26365e" />
              <path d="M0 6.500h6V3l7.500 6.500L6 16v-3.500H0z" fill="#2b76e4" stroke="#174a9c" strokeWidth="0.800" />
            </svg>
            <span className="mb-[2px] w-[20px] font-['Open_Sans'] text-[17px] leading-none font-bold text-black">?</span>
            <svg className="mr-[10px] mb-[3px]" width="9" height="13" fill="none" stroke="#000">
              <path d="M2 1h5v6H2z" strokeWidth="1.300" /><path d="M6.300 1v6" strokeWidth="1.800" /><path d="M0 7.500h9M4.500 8v5" strokeWidth="1.400" />
            </svg>
          </div>
          <div className="flex flex-1">
            <SideTabs />
            <ToolPanel />
          </div>
        </aside>
        <main className="flex w-[1553px] flex-col">
          <div className="shrink-0 pl-[8px]"><ViewBar /></div>
          <div className="flex h-[31px] shrink-0 gap-[2px] pl-[5.500px] pt-[0.500px]">
            <svg width="29" height="29" className="block">
              <rect x="0.500" y="0.500" width="28" height="28" fill="#efefef" stroke="#9a9a9a" />
              <path d="M1 28V1h27" stroke="#777" fill="none" strokeWidth="1.500" />
              <path d="M13 3v24M4 17h20" stroke="#111" strokeWidth="1.300" strokeDasharray="4 3" />
              <circle cx="13" cy="17" r="1.700" fill="#000" />
            </svg>
            <TopRuler />
          </div>
          <div className="flex flex-1">
            <div className="w-[36px] pl-[5.500px]"><LeftRuler /></div>
            <div className="flex-1 pt-[1px]">
              <div className="border-t-2 border-l-2 border-[#2c2c2e]">
                <div className="flex">
                  <div className="h-[843px] w-[1495px] overflow-hidden border-r border-b border-[#f8f8f8]">
                    <div className="-mt-[3px] -ml-[1px]"><Workspace /></div>
                  </div>
                  <div className="flex w-[20px] justify-center pt-[234px] pl-[1px]">
                    <span className="h-[232px] w-[2.500px] rounded bg-[#858585]" />
                  </div>
                </div>
                <div className="flex h-[21px] items-center pl-[494px]">
                  <span className="h-[2.500px] w-[517px] rounded bg-[#858585]" />
                </div>
              </div>
            </div>
          </div>
        </main>
        <aside className="w-[28px] bg-[#fbfbfb] pt-[2px] pl-[3px]">
          <div className="flex h-[82px] items-center rounded-l-[3px] border border-r-0 border-[#a2a2a2] bg-[#f8f8f8]">
            <span className="ml-[1px] font-['Liberation_Sans'] text-[14.500px] leading-[22px] tracking-[0.600px] text-[#222] [writing-mode:vertical-rl]">Toolpaths</span>
          </div>
        </aside>
      </div>
    </div>
  );
}
